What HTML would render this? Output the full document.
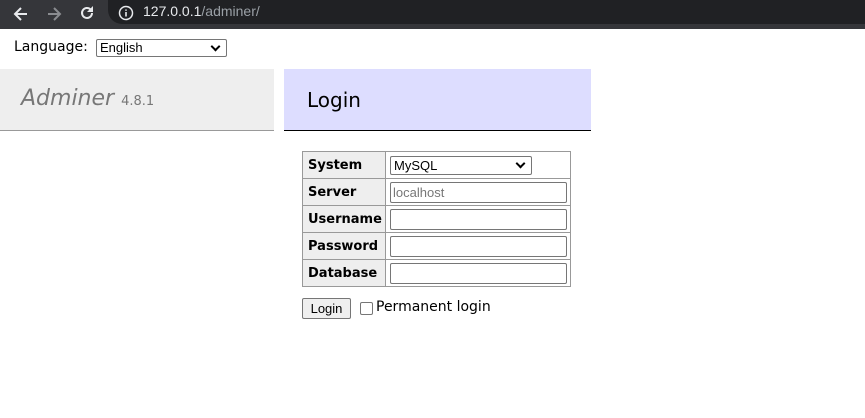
<!DOCTYPE html>
<html><head><style>
body{margin:0;width:865px;height:418px;background:#fff;font-family:"DejaVu Sans",Verdana,sans-serif;position:relative;overflow:hidden}
.bar{position:absolute;left:0;top:0;width:865px;height:29px;background:#35363a}
.pill{position:absolute;left:108px;top:0;width:770px;height:24px;background:#202124;border-radius:0 0 0 14px}
.url{position:absolute;left:143px;top:3px;font:14px "Liberation Sans",Arial,sans-serif;color:#e8eaed}
.url span{color:#9aa0a6}
.abs{position:absolute}
.lang{left:14px;top:39px;font-size:14px;color:#000}
.sel{position:absolute;border:1px solid #767676;border-radius:2px;background:#fff;font:13px "Liberation Sans",Arial,sans-serif;padding-left:3px;line-height:16px;color:#000;box-sizing:border-box}
.sel:after{content:"";position:absolute;right:7px;top:3px;width:5px;height:5px;border-right:2px solid #000;border-bottom:2px solid #000;transform:rotate(45deg)}
.side{left:0;top:69px;width:274px;height:61px;background:#eee;border-bottom:1px solid #999}
.side .t{position:absolute;left:21px;top:17px;font-size:22px;font-style:italic;color:#777}
.side .v{font-size:13px;font-style:normal;color:#777}
.head{left:284px;top:69px;width:307px;height:61px;background:#ddf;border-bottom:1px solid #000}
.head div{position:absolute;left:23px;top:19px;font-size:20px;color:#000}
table{position:absolute;left:302px;top:151px;border-collapse:collapse;font-size:13px;table-layout:fixed;width:269px}
th,td{border:1px solid #999;height:27px;box-sizing:border-box}
th{background:#eee;text-align:left;width:83px;padding:0 3px 0 5px}
td{padding:0 0 0 4px}
.inp{width:177px;height:21px;box-sizing:border-box;border:1px solid #767676;border-radius:2px;font:13px "Liberation Sans",Arial,sans-serif;color:#777;padding-left:2px;line-height:19px}
</style></head><body>
<div class="bar"><div class="pill"></div>
<svg class="abs" style="left:12px;top:5px" width="18" height="18" viewBox="0 0 18 18"><path d="M15 9H4M9 3L3 9l6 6" stroke="#e8eaed" stroke-width="2" fill="none"/></svg>
<svg class="abs" style="left:45px;top:5px" width="18" height="18" viewBox="0 0 18 18"><path d="M3 9h11M9 3l6 6-6 6" stroke="#8a8c90" stroke-width="2" fill="none"/></svg>
<svg class="abs" style="left:78px;top:4px" width="18" height="18" viewBox="0 0 18 18"><path d="M14 9a5 5 0 1 1-1.5-3.6" stroke="#e8eaed" stroke-width="2" fill="none"/><path d="M15 2v6h-6z" fill="#e8eaed"/></svg>
<svg class="abs" style="left:118px;top:5px" width="16" height="16" viewBox="0 0 16 16"><circle cx="8" cy="8" r="6.5" stroke="#e8eaed" stroke-width="1.5" fill="none"/><path d="M8 7v4.5M8 4.5v1.3" stroke="#e8eaed" stroke-width="1.6"/></svg>
<div class="url">127.0.0.1<span>/adminer/</span></div>
</div>
<div class="abs lang">Language: </div>
<div class="sel" style="left:96px;top:39px;width:131px;height:18px">English</div>
<div class="abs side"><div class="t">Adminer <span class="v">4.8.1</span></div></div>
<div class="abs head"><div>Login</div></div>
<table>
<tr><th>System</th><td><div class="sel" style="position:relative;width:142px;height:19px;font-size:13px;line-height:17px">MySQL</div></td></tr>
<tr><th>Server</th><td><div class="inp">localhost</div></td></tr>
<tr><th>Username</th><td><div class="inp"></div></td></tr>
<tr><th>Password</th><td><div class="inp"></div></td></tr>
<tr><th>Database</th><td><div class="inp"></div></td></tr>
</table>
<div class="abs" style="left:302px;top:298px;width:49px;height:21px;box-sizing:border-box;border:1px solid #767676;border-radius:2px;background:#efefef;font:13px 'Liberation Sans',Arial,sans-serif;text-align:center;line-height:19px">Login</div>
<div class="abs" style="left:360px;top:302px;width:13px;height:13px;box-sizing:border-box;border:1px solid #767676;border-radius:2px"></div>
<div class="abs" style="left:376px;top:298px;font-size:14px;line-height:18px">Permanent login</div>
</body></html>
